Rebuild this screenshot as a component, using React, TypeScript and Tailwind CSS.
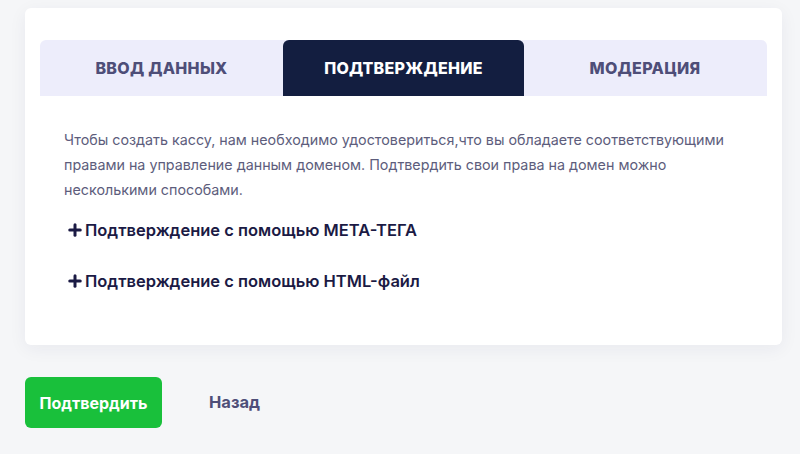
import { Plus } from 'lucide-react';

const tabs = ['Ввод данных', 'Подтверждение', 'Модерация'];
const methods = ['Подтверждение с помощью МЕТА-ТЕГА', 'Подтверждение с помощью HTML-файл'];

export default function App() {
  const active = 1;

  return (
    <div className="min-h-[454px] w-[800px] bg-[#f5f6f8] pt-2 pl-[25px] font-['Inter',sans-serif]">
      {/* карточка */}
      <div className="w-[757px] h-[337px] rounded-md bg-white pt-8 px-[15px] shadow-[0_4px_18px_rgba(30,40,80,0.06)]">
        <div className="grid grid-cols-[243px_241px_242px] h-14 bg-[#ededfb] rounded-t-md">
          {tabs.map((t, i) => (
            <div
              key={t}
              className={
                i === active
                  ? 'flex items-center justify-center rounded-t-md bg-[#131e40] text-white text-[16px] tracking-[0.3px] font-extrabold uppercase'
                  : 'flex items-center justify-center text-[#4e4e78] text-[16px] tracking-[0.3px] font-extrabold uppercase'
              }
            >
              {t}
            </div>
          ))}
        </div>

        <div className="pl-6 pt-[31px]">
          <p className="w-[676px] text-[14.3px] leading-[25px] text-[#5d5d7c]">
            Чтобы создать кассу, нам необходимо удостовериться,что вы обладаете соответствующими правами на
            управление данным доменом. Подтвердить свои права на домен можно несколькими способами.
          </p>
          <div className="mt-4 flex flex-col gap-[27px]">
            {methods.map((m) => (
              <div key={m} className="flex items-center h-6 text-[16.5px] font-semibold text-[#1b1a44]">
                <Plus className="w-[18px] h-[18px] ml-[2px] mr-[1px]" strokeWidth={4} />
                {m}
              </div>
            ))}
          </div>
        </div>
      </div>

      <div className="mt-8 flex items-center">
        <button className="w-[137px] h-[51px] rounded-md bg-[#19c03b] text-white text-[16px] font-bold">
          Подтвердить
        </button>
        <button className="ml-[47px] text-[16.5px] font-bold text-[#4e4e78]">Назад</button>
      </div>
    </div>
  );
}
